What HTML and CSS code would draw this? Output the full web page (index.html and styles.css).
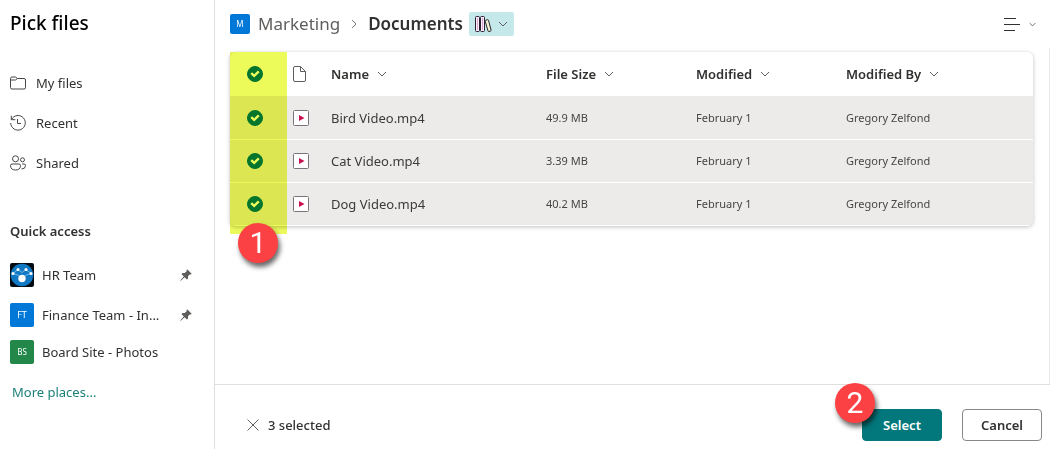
FILE: index.html
```html
<!DOCTYPE html>
<html lang="en">
<head>
<meta charset="utf-8">
<meta name="viewport" content="width=device-width, initial-scale=1">
<title>Pick files</title>
<link rel="stylesheet" href="styles.css">
</head>
<body>
<svg class="sprite" aria-hidden="true">
  <symbol id="chevron" viewBox="0 0 10 10"><path d="M1 3l4 4 4-4" fill="none" stroke="currentColor"/></symbol>
  <symbol id="pin" viewBox="0 0 12 12"><path d="M7.200.3l4.500 4.500-1 .7-.7-.2-2 2 .1 2.300-1.200 1L4.600 8.300.8 11.700l-.5.1.1-.5L3.800 7.500 1.500 5.100l1-1.200 2.300.1 2-2-.2-.7z" fill="currentColor"/></symbol>
  <symbol id="video" viewBox="0 0 16 16"><rect x=".5" y=".5" width="15" height="15" rx="1" fill="#fff" stroke="#77757a"/><path d="M6 5l5.500 3L6 11z" fill="#c8104d"/></symbol>
</svg>
<div class="picker">
  <aside class="sidebar">
    <h1 class="title">Pick files</h1>
    <nav class="nav" aria-label="Locations">
      <a class="nav-link" href="#"><svg class="icon16" viewBox="0 0 16 16"><path d="M.5 12.500v-9q0-1.500 1.500-1.500h3.500l2 1.500h6.500q1.500 0 1.500 1.500v7.500q0 1.500-1.500 1.500H2q-1.500 0-1.500-1.500zM.5 5H5.500L7.500 3.500"/></svg>My files</a>
      <a class="nav-link" href="#"><svg class="icon16" viewBox="0 0 16 16"><path d="M1.500 4.500A7.300 7.300 0 1 1 .7 8M1.300.7v4h4M7.500 4v4.500h3.500"/></svg>Recent</a>
      <a class="nav-link" href="#"><svg class="icon16" viewBox="0 0 16 16"><circle cx="5.500" cy="3.800" r="3"/><circle cx="12.500" cy="4.800" r="2"/><path d="M2 9h7q1.500 0 1.500 1.500 0 4.500-5 4.500t-5-4.500Q.5 9 2 9zM12 9h2q1.500 0 1.500 1.500 0 3.500-4 3.500"/></svg>Shared</a>
    </nav>
    <h2 class="subtitle">Quick access</h2>
    <nav class="places" aria-label="Quick access">
      <a class="place" href="#">
        <svg class="tile" viewBox="0 0 24 24"><rect width="24" height="24" fill="#050b12"/><circle cx="12" cy="12" r="11.300" fill="#1179c4"/><path d="M3 10.500l5-4 4 3 4-3 5 4M3 10.500l6 2M21 10.500l-6 2" fill="none" stroke="#8cc4ec" stroke-width=".8"/><g fill="#fff"><circle cx="12" cy="15.500" r="3.700"/><circle cx="3" cy="10.500" r="1.500"/><circle cx="8" cy="6.500" r="1.500"/><circle cx="16" cy="6.500" r="1.500"/><circle cx="21" cy="10.500" r="1.500"/></g></svg>
        <span class="place-name">HR Team</span><svg class="pin"><use href="#pin"/></svg></a>
      <a class="place" href="#"><span class="tile tile-blue">FT</span><span class="place-name">Finance Team - In...</span><svg class="pin"><use href="#pin"/></svg></a>
      <a class="place place-unpinned" href="#"><span class="tile tile-green">BS</span><span class="place-name">Board Site - Photos</span></a>
    </nav>
    <a class="more" href="#">More places...</a>
  </aside>
  <main class="main">
    <header class="topbar">
      <span class="site-tile">M</span>
      <a class="crumb" href="#">Marketing</a>
      <svg class="crumb-arrow" viewBox="0 0 10 10"><path d="M3 1l4 4-4 4"/></svg>
      <span class="crumb-current">Documents</span>
      <button class="library" type="button" aria-label="Switch library">
        <svg class="books" viewBox="0 0 17 16"><g fill="#fbeefa" stroke="#272130"><rect x=".5" y=".5" width="4" height="15" rx="1"/><rect x="5.500" y=".5" width="4" height="15" rx="1"/><path fill="#f3f3cf" d="M10.600 4.300l2-.6q.7-.1.900.6l2.600 9.900q.1.700-.6.900l-1.600.4q-.7.100-.9-.6l-2.800-9.600q-.1-.8.400-1z"/></g><path d="M2.500 2v12M7.500 2v12" stroke="#e0a6da"/></svg>
        <svg class="chevron"><use href="#chevron"/></svg>
      </button>
      <button class="view" type="button" aria-label="View options">
        <svg class="lines" viewBox="0 0 16 14"><path d="M0 1.500h12M0 7.500h16M0 13.500h11"/></svg>
        <svg class="chevron-small"><use href="#chevron"/></svg>
      </button>
    </header>
    <section class="content">
      <div class="card">
        <table class="files">
          <colgroup><col class="col-check"><col class="col-type"><col class="col-name"><col class="col-data"><col class="col-data"><col></colgroup>
          <thead><tr>
            <th><input class="check" type="checkbox" aria-label="Select all" checked></th>
            <th><svg class="doc" viewBox="0 0 13 16"><path d="M2 .5h5.500l5 5V14q0 1.500-1.500 1.500H2Q.5 15.500.5 14V2Q.5.500 2 .5zM7.500.5v5h5"/></svg></th>
            <th><button class="sort" type="button">Name<svg class="chevron"><use href="#chevron"/></svg></button></th>
            <th><button class="sort" type="button">File Size<svg class="chevron"><use href="#chevron"/></svg></button></th>
            <th><button class="sort" type="button">Modified<svg class="chevron"><use href="#chevron"/></svg></button></th>
            <th><button class="sort" type="button">Modified By<svg class="chevron"><use href="#chevron"/></svg></button></th>
          </tr></thead>
          <tbody>
            <tr><td><input class="check" type="checkbox" aria-label="Bird Video.mp4" checked></td><td><svg class="video"><use href="#video"/></svg></td><td class="name">Bird Video.mp4</td><td>49.9 MB</td><td>February 1</td><td>Gregory Zelfond</td></tr>
            <tr><td><input class="check" type="checkbox" aria-label="Cat Video.mp4" checked></td><td><svg class="video"><use href="#video"/></svg></td><td class="name">Cat Video.mp4</td><td>3.39 MB</td><td>February 1</td><td>Gregory Zelfond</td></tr>
            <tr><td><input class="check" type="checkbox" aria-label="Dog Video.mp4" checked></td><td><svg class="video"><use href="#video"/></svg></td><td class="name">Dog Video.mp4</td><td>40.2 MB</td><td>February 1</td><td>Gregory Zelfond</td></tr>
          </tbody>
        </table>
        <div class="marker"></div>
        <span class="step step-one">1</span>
      </div>
    </section>
    <footer class="footer">
      <button class="clear" type="button" aria-label="Clear selection"><svg class="cross" viewBox="0 0 12 12"><path d="M.5.500l11 11M11.500.5l-11 11"/></svg></button>
      <span class="count">3 selected</span>
      <div class="primary">
        <button class="button button-primary" type="button">Select</button>
        <span class="step step-two">2</span>
      </div>
      <button class="button" type="button">Cancel</button>
    </footer>
  </main>
</div>
</body>
</html>
```
FILE: styles.css
```css
* { box-sizing: border-box; }
body {
  margin: 0;
  background: #fff;
  color: #323130;
  font: 13px/20px "Noto Sans", "Open Sans", sans-serif;
}
a { color: inherit; text-decoration: none; }
button {
  padding: 0;
  border: 0;
  background: none;
  color: inherit;
  font: inherit;
  cursor: pointer;
}
svg { display: block; flex: none; }
.sprite { position: absolute; width: 0; height: 0; }

.picker {
  display: grid;
  grid-template-columns: 215px minmax(0, 1fr);
  min-height: 100vh;
}

/* Sidebar */
.sidebar {
  display: flex;
  flex-direction: column;
  padding: 8px 20px 0 10px;
  border-right: 1px solid #e1dfdd;
}
.title {
  margin: 0 0 25px;
  color: #000;
  font-size: 19px;
  font-weight: 500;
  line-height: 30px;
}
.nav-link {
  display: flex;
  align-items: center;
  gap: 10px;
  height: 40px;
}
.icon16 {
  width: 16px;
  height: 16px;
  fill: none;
  stroke: #484644;
}
.subtitle {
  margin: 38px 0 14px;
  font-size: 13px;
  font-weight: 600;
}
.place {
  display: flex;
  align-items: center;
  gap: 8px;
  height: 40px;
}
.place-unpinned { height: 34px; }
.place-name {
  width: 120px;
  white-space: nowrap;
}
.tile {
  flex: none;
  width: 24px;
  height: 24px;
  border-radius: 2px;
  color: #fff;
  font-size: 9px;
  line-height: 24px;
  text-align: center;
}
.tile-blue { background: #0078d7; }
.tile-green { background: #23874a; font-size: 8px; }
.pin { width: 12px; height: 12px; margin-left: 10px; color: #605e5c; }
.more { margin: 13px 0 0 2px; color: #1b7f78; }

/* Header */
.main {
  display: grid;
  grid-template-rows: 48px 1fr auto;
  min-width: 0;
}
.topbar {
  display: flex;
  align-items: center;
  padding: 0 14px 0 15px;
  font-size: 17px;
}
.site-tile {
  width: 20px;
  height: 20px;
  margin-right: 8px;
  border-radius: 2px;
  background: #0078d7;
  color: #fff;
  font-size: 8px;
  line-height: 20px;
  text-align: center;
}
.crumb { color: #605e5c; }
.crumb-arrow {
  width: 10px;
  height: 10px;
  margin: 0 9px;
  fill: none;
  stroke: #797775;
}
.crumb-current { font-weight: 600; }
.library {
  display: flex;
  align-items: center;
  gap: 6px;
  height: 24px;
  margin-left: 6px;
  padding: 0 6px;
  border-radius: 2px;
  background: #c5e9ea;
}
.books { width: 17px; height: 16px; }
.chevron { width: 10px; height: 10px; color: #605e5c; }
.view {
  display: flex;
  align-items: center;
  gap: 9px;
  margin-left: auto;
}
.lines { width: 16px; height: 14px; stroke: #323130; }
.chevron-small { width: 7px; height: 7px; }
.chevron-small path { stroke-width: 2; }

/* File list */
.content {
  padding: 4px 16px 24px 15px;
  border-right: 1px solid #edebe9;
}
.card { position: relative; }
.files {
  width: 100%;
  overflow: hidden;
  border-spacing: 0;
  border-radius: 6px;
  box-shadow: 0 1px 4px rgba(0, 0, 0, .25);
  table-layout: fixed;
}
.col-check { width: 57px; }
.col-type { width: 44px; }
.col-name { width: 215px; }
.col-data { width: 150px; }
th, td { padding: 0; text-align: left; }
th { height: 44px; }
td {
  height: 43px;
  border-bottom: 1px solid #fff;
  background: #edebe9;
  color: #484644;
  font-size: 11px;
}
tbody tr:first-child td { height: 44px; padding-top: 1px; }
.files .name { font-size: 13px; color: #3b3a39; }
.sort {
  display: flex;
  align-items: center;
  gap: 8px;
  font-weight: 600;
}
.check {
  display: block;
  width: 16px;
  height: 16px;
  margin: 0 0 0 17px;
  border: 1px solid #03787c;
  border-radius: 50%;
  appearance: none;
}
.check:checked { background: #03787c; }
.check:checked::before {
  display: block;
  height: 14px;
  background: #fff;
  clip-path: polygon(17% 50%, 29% 38%, 44% 51%, 71% 25%, 83% 38%, 44% 75%);
  content: "";
}
.doc {
  width: 13px;
  height: 16px;
  margin-left: 6px;
  fill: none;
  stroke: #605e5c;
}
.video { width: 16px; height: 16px; margin-left: 6px; }

/* Annotations laid over the list */
.marker {
  position: absolute;
  top: 0;
  bottom: -8px;
  left: 0;
  width: 57px;
  background: #ecfa5a;
  mix-blend-mode: multiply;
  pointer-events: none;
}
.step {
  position: absolute;
  width: 40px;
  height: 40px;
  border-radius: 50%;
  background: #fc4144;
  box-shadow: 2px 4px 5px rgba(0, 0, 0, .6);
  color: #fff;
  font: 30px/40px Roboto, Arial, sans-serif;
  text-align: center;
  pointer-events: none;
}
.step-one { bottom: -37px; left: 8px; }
.step-two { top: -26px; left: -27px; }

/* Footer */
.footer {
  display: flex;
  align-items: center;
  padding: 24px 8px 8px 32px;
  border-top: 1px solid #e1dfdd;
}
.cross { width: 12px; height: 12px; fill: none; stroke: #605e5c; }
.count { margin-left: 9px; font-weight: 500; }
.primary { position: relative; margin: 0 20px 0 auto; }
.button {
  width: 80px;
  height: 32px;
  border: 1px solid #8a8886;
  border-radius: 4px;
  font-weight: 600;
}
.button-primary { border-color: #03787c; background: #03787c; color: #fff; }
```
